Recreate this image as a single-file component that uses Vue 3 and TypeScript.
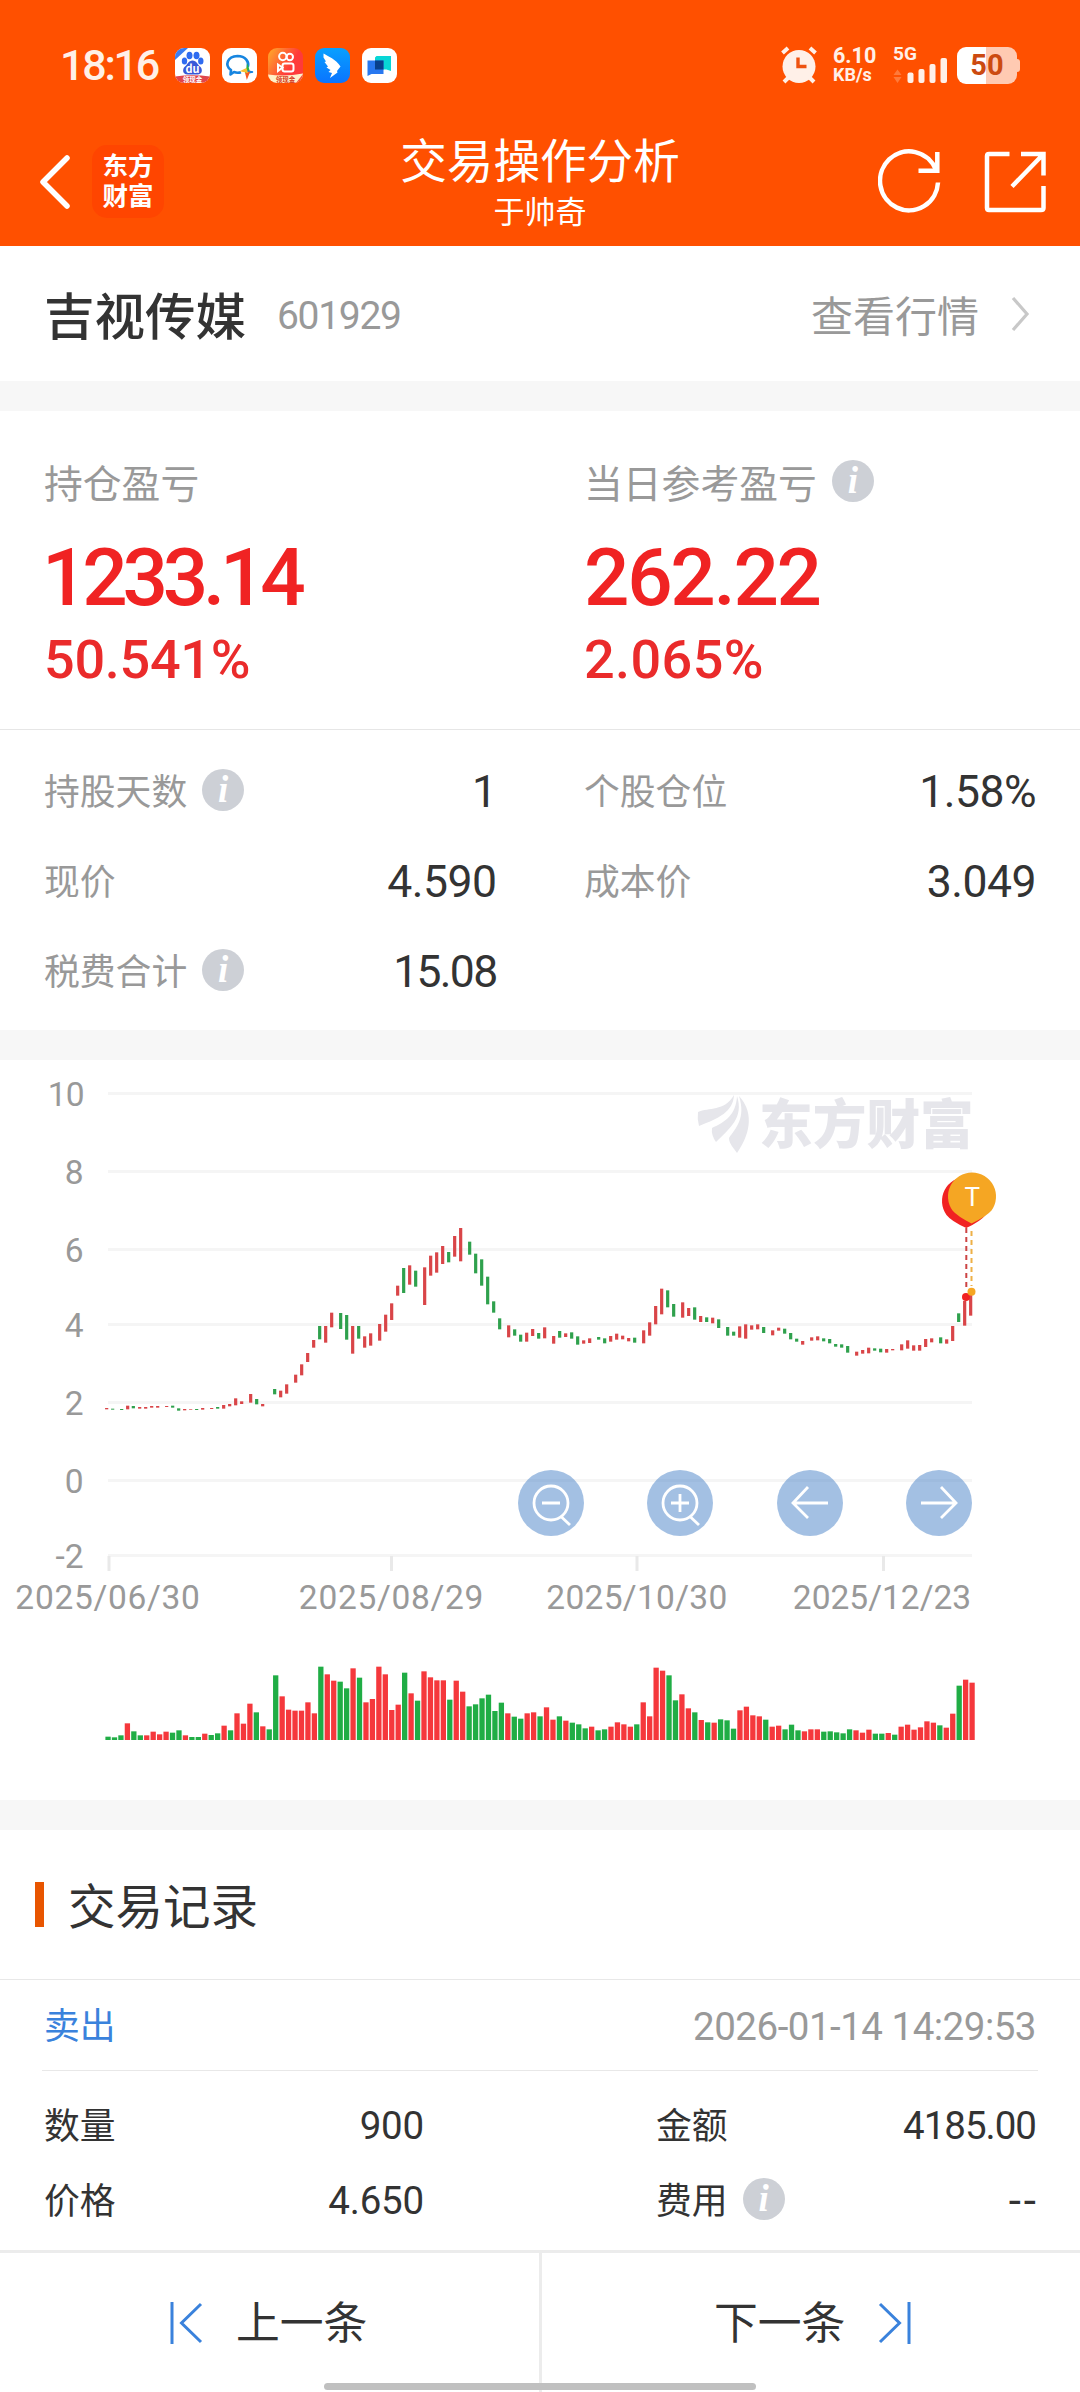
<script setup lang="ts">
type Tone = 'up' | 'down'
interface Bar { x: number; y: number; h: number; tone: Tone }

const toneOf = (token: string): Tone => (token.endsWith('r') ? 'up' : 'down')

// Each candle is "centre,top,bottom,tone" in thirds of a pixel from the group's origin.
const candleGroups: { x: number; y: number; data: string }[] = [
  { x: 80, y: 1200, data: '80,624,628r 98,626,629g 125,627,630g 143,617,628r 160,618,625g 179,621,626r 197,621,626r 215,618,623r 233,618,623r 260,618,621r 278,617,623g 296,625,632g 314,627,631r 332,627,629r 350,627,630g 368,624,629r 395,624,627r 413,621,626g 431,615,626r 449,612,619r 467,595,616r 485,604,612r 512,582,608r 530,597,613g 548,612,619r 584,567,583g 602,572,592r 620,553,581r 647,524,548r 665,493,526r 683,459,486r 701,420,443r 719,378,418g 737,378,428r 755,338,382r 782,339,387g 800,345,419g 818,378,461r 836,378,416g 854,409,443r 872,400,437r 899,372,422r 917,344,395r 935,310,360r 953,257,287r 971,204,279g' },
  { x: 400, y: 1200, data: '29,196,254r 47,212,260g 74,202,315r 92,167,227r 110,157,218r 128,138,192r 146,156,187g 164,108,170r 182,84,184r 209,125,164g 227,161,220g 245,178,257g 263,230,313g 281,304,338g 299,355,388g 326,376,412r 344,388,407g 362,404,425g 380,398,425r 398,387,408r 416,399,416g 434,382,415r 461,408,431r 479,393,413g 497,400,411r 515,397,416g 533,409,434g 551,421,431r 569,415,429r 596,411,419g 614,415,430g 632,408,425r 650,401,419r 668,407,418r 686,414,424r 704,413,428g 731,391,430r 749,367,407r 767,318,373r 785,266,343r 803,271,322g 821,312,350g 848,307,353r 866,324,348r 884,322,359g 902,348,366r 920,352,366g 938,353,370r 956,358,384g' },
  { x: 680, y: 1260, data: '143,201,227g 161,215,227g 179,199,233r 197,193,236r 215,196,209r 233,193,208r 251,201,219g 278,211,226r 296,203,212r 314,206,221g 332,219,238g 350,236,245g 368,243,254r 395,232,242r 413,229,241r 431,235,244g 449,237,250g 467,252,260g 485,253,263g 503,258,278g 530,275,287r 548,270,281r 566,263,280r 584,265,272g 602,266,277g 620,267,278r 638,267,271r 665,253,271r 683,241,266r 701,256,272r 719,255,272r 737,237,261r 755,235,247r 782,232,250g 800,238,251r 818,198,243r 836,160,186g 854,123,197r 872,105,167r' },
]

const candles: Bar[] = candleGroups.flatMap((g) =>
  g.data.split(' ').map((token) => {
    const [cx, top, bottom] = token.slice(0, -1).split(',').map(Number)
    return { x: g.x + cx / 3 - 1.6, y: g.y + top / 3, h: (bottom - top) / 3, tone: toneOf(token) }
  }),
)

const volumeData =
  '260g 262g 256g 220r 244g 256g 256r 245r 253r 245r 248g 241g 256r 261g 261g 251r 255g 250g 227r 241g 190r 221r 161r 187g 229r 238g 76g 139r 179r 182r 182r 157r 190r 50g 73r 92r 95g 115g 55r 83g 157r 147r 50r 73r 180r 164r 68g 130r 152g 64r 82r 91r 91r 149g 92r 125r 169g 163g 145g 134g 183g 158g 190r 200g 206g 190r 187r 199g 172r 209r 199g 212r 218g 223g 235g 230r 241g 238g 230r 217r 223r 230r 223g 157r 199r 53r 62r 76g 151g 133r 175r 187g 210r 217g 218r 208g 211g 236g 181r 170r 196r 199r 209g 230r 227r 238g 224g 241g 244r 238r 238r 245g 244g 247g 250g 238g 241r 248r 239r 251g 251g 249r 254g 230r 224r 239r 232r 214r 218r 226g 233r 191r 107g 89r 98r'

const volumes: Bar[] = volumeData.split(' ').map((token, i) => {
  const h = (270 - parseInt(token, 10)) / 3
  return { x: 108 + i * 6.448 - 2.6, y: 1740 - h, h, tone: toneOf(token) }
})

const yAxis = [
  { label: '10', y: 1093.5 },
  { label: '8', y: 1171.5 },
  { label: '6', y: 1249.5 },
  { label: '4', y: 1324.5 },
  { label: '2', y: 1402.5 },
  { label: '0', y: 1480.5 },
  { label: '-2', y: 1555.5 },
]

const xAxis = [
  { label: '2025/06/30', x: 109, text: 108, gap: 0.7 },
  { label: '2025/08/29', x: 391.5, text: 391.5, gap: 0.7 },
  { label: '2025/10/30', x: 637, text: 637, gap: 0.3 },
  { label: '2025/12/23', x: 883.5, text: 882, gap: 0 },
]

const details = [
  { label: '持股天数', value: '1', info: true },
  { label: '个股仓位', value: '1.58%', info: false },
  { label: '现价', value: '4.590', info: false },
  { label: '成本价', value: '3.049', info: false },
  { label: '税费合计', value: '15.08', info: true },
]
</script>

<template>
  <div class="page">
    <header class="top">
      <div class="status">
        <span class="clock">18:16</span>
        <div class="apps">
          <svg viewBox="0 0 35 35">
            <defs><clipPath id="round"><rect width="35" height="35" rx="9" /></clipPath></defs>
            <g clip-path="url(#round)">
              <rect width="35" height="35" fill="#fff" />
              <path d="M0 0H13L0 12Z" fill="#3a7cf0" />
              <g fill="#2f6bf0">
                <ellipse cx="14.500" cy="7.500" rx="3" ry="3.800" />
                <ellipse cx="21.500" cy="7.500" rx="3" ry="3.800" />
                <ellipse cx="9.500" cy="13" rx="2.700" ry="3.500" />
                <ellipse cx="25.800" cy="13" rx="2.700" ry="3.500" />
                <path d="M17.500 12.500c4 0 5 4 7.500 6 3 2.500 2.500 8-2.500 8h-10c-5 0-5.500-5.500-2.500-8 2.500-2 3.500-6 7.500-6z" fill="#3858d8" />
              </g>
              <text x="17.500" y="25" font-size="11" font-weight="700" fill="#fff" text-anchor="middle">du</text>
              <path d="M0 28.500Q17.500 26 35 28.500V35H0Z" fill="#e0464c" />
              <text x="17.500" y="34" font-size="6.500" font-weight="700" fill="#fff" text-anchor="middle">领现金</text>
            </g>
          </svg>
          <svg viewBox="0 0 35 35">
            <rect width="35" height="35" rx="9" fill="#fff" />
            <path d="M19 24.200C16.500 25 14 24.800 12 24L8.500 26.500 9 22C2.500 17.500 5 8.500 15.500 8c8 0 12 6 10.300 11" fill="none" stroke="#1685e0" stroke-width="2.600" stroke-linejoin="round" />
            <path d="M25.500 18l1.500 5-3 1z" fill="#2fb344" stroke="#2fb344" stroke-width="1.500" />
            <path d="M31 24l-5 1-1-2z" fill="#1685e0" stroke="#1685e0" stroke-width="1.500" />
            <path d="M25 29.500l-1-4 3-1z" fill="#fa5a1e" stroke="#fa5a1e" stroke-width="1.500" />
            <path d="M20 23l4-2 1 3z" fill="#fbc02d" stroke="#fbc02d" stroke-width="1.500" />
          </svg>
          <svg viewBox="0 0 35 35">
            <defs>
              <linearGradient id="warm" x1="0" y1="0" x2="1" y2="0.600">
                <stop offset="0" stop-color="#ffae2a" /><stop offset="0.700" stop-color="#ff3a3a" />
              </linearGradient>
            </defs>
            <g clip-path="url(#round)">
              <rect width="35" height="35" fill="url(#warm)" />
              <g fill="none" stroke="#fff" stroke-width="2">
                <circle cx="14.800" cy="8.500" r="3.700" /><circle cx="21.800" cy="9" r="3.200" />
                <rect x="14.500" y="15.500" width="11" height="8" rx="2.200" /><path d="M14.500 19.500L10 16.500v6.500z" />
              </g>
              <path d="M0 26.500Q17.500 29 35 25.500V35H0Z" fill="#fff0c8" />
              <path d="M28 35L35 26v9z" fill="#f4523b" />
              <text x="17.500" y="34" font-size="6.500" font-weight="700" fill="#d63a20" text-anchor="middle">领现金</text>
            </g>
          </svg>
          <svg viewBox="0 0 35 35">
            <defs>
              <linearGradient id="sky" x1="0" y1="0" x2="0" y2="1">
                <stop offset="0" stop-color="#08a0ff" /><stop offset="1" stop-color="#0a74ff" />
              </linearGradient>
            </defs>
            <rect width="35" height="35" rx="9" fill="url(#sky)" />
            <path d="M8.500 5.500C13 8.500 21 11 25.500 18.500L22 23 22.500 24.500 15 30 17 25 13.500 24 15.500 22 11.500 19.500 13 18.500 9.500 14 11 13.500 8.500 9.500Z" fill="#fff" />
          </svg>
          <svg viewBox="0 0 35 35">
            <rect width="35" height="35" rx="9" fill="#fff" />
            <path d="M14.500 8H29v15l-4.500-1.500H13V9.500Z" fill="#08d6d6" />
            <path d="M5.500 12.500H21.500V26H9.500L5.500 28Z" fill="#2878f0" />
            <rect x="13" y="12.500" width="8.500" height="9" fill="#08408c" />
          </svg>
        </div>
        <svg class="alarm" viewBox="0 0 38 38">
          <circle cx="19" cy="20.500" r="16.500" fill="#fff0e8" />
          <path d="M2.500 7L8 2M35.500 7L30 2" stroke="#fff0e8" stroke-width="4" />
          <path d="M4 36l5-5M34 36l-5-5" stroke="#fff0e8" stroke-width="4" />
          <path d="M18 11.500V20.500H26.500" fill="none" stroke="#ee5210" stroke-width="3.400" />
        </svg>
        <div class="net"><span>6.10</span><span class="unit">KB/s</span></div>
        <div class="signal">
          <span>5G</span>
          <svg viewBox="0 0 54 26">
            <path d="M0.500 18L4.500 12.500 8.500 18ZM0.500 20L4.500 26 8.500 20Z" fill="#ff7a3a" />
            <g fill="#fff0e8">
              <rect x="14.500" y="15.500" width="6" height="10.500" rx="2" /><rect x="25.500" y="12" width="6" height="14" rx="2" />
              <rect x="36.500" y="7" width="6" height="19" rx="2" /><rect x="47.500" y="1" width="6.500" height="25" rx="2" />
            </g>
          </svg>
        </div>
        <div class="battery"><span>50</span></div>
      </div>
      <div class="nav">
        <div class="nav-side">
          <svg class="back" viewBox="0 0 34 58"><path d="M29 5L5 29 29 53" fill="none" stroke="#fff" stroke-width="5.500" stroke-linecap="round" stroke-linejoin="round" /></svg>
          <div class="brand"><span>东方</span><span>财富</span></div>
        </div>
        <div class="titles"><h1>交易操作分析</h1><p>于帅奇</p></div>
        <div class="nav-side actions">
          <svg width="64" height="66" viewBox="0 0 64 66">
            <path d="M60 33.500A29 29.500 0 1 1 58 21" fill="none" stroke="#fff" stroke-width="4.500" />
            <path d="M59.300 3V21.800H40.500" fill="none" stroke="#fff" stroke-width="4.500" />
          </svg>
          <svg width="62" height="64" viewBox="0 0 62 64">
            <path d="M25.500 4H5Q3 4 3 6V58Q3 60 5 60H57Q59.500 60 59.500 58V36" fill="none" stroke="#fff" stroke-width="4.500" />
            <path d="M37 4H59.500V25.500M59 4.500L28 36.500" fill="none" stroke="#fff" stroke-width="4.500" />
          </svg>
        </div>
      </div>
    </header>

    <section class="stock">
      <span class="name cjk">吉视传媒</span>
      <span class="code">601929</span>
      <span class="quote cjk">查看行情</span>
      <svg class="more" viewBox="0 0 20 40"><path d="M3 4L17 20 3 36" fill="none" stroke="#c8c8c8" stroke-width="3.200" /></svg>
    </section>

    <section class="summary">
      <div class="cell held">
        <div class="caption"><span class="cjk">持仓盈亏</span></div>
        <div class="big">1233.14</div>
        <div class="pct">50.541%</div>
      </div>
      <div class="cell">
        <div class="caption"><span class="cjk">当日参考盈亏</span><i class="info">i</i></div>
        <div class="big">262.22</div>
        <div class="pct">2.065%</div>
      </div>
    </section>

    <section class="details">
      <div v-for="d in details" :key="d.label" class="detail">
        <span class="cjk">{{ d.label }}</span><i v-if="d.info" class="info">i</i>
        <b>{{ d.value }}</b>
      </div>
    </section>

    <section class="chart">
      <svg viewBox="0 1060 1080 740" width="1080" height="740">
        <g fill="#f5f5f5">
          <rect v-for="t in yAxis" :key="t.label" x="108" :y="t.y - 1.5" width="864" height="3" />
        </g>
        <g fill="#e9e9e9">
          <rect v-for="t in xAxis" :key="t.label" :x="t.x - 1.5" y="1556" width="3" height="15" />
        </g>
        <g class="axis">
          <text v-for="t in yAxis" :key="t.label" x="83.500" :y="t.y + 12" text-anchor="end" :letter-spacing="t.label === '10' ? -1 : 0">{{ t.label }}</text>
          <text v-for="t in xAxis" :key="t.label" :x="t.text" y="1609" text-anchor="middle" :letter-spacing="t.gap">{{ t.label }}</text>
        </g>
        <g fill="#e6e6eb">
          <path d="M698 1112C709 1107 724 1112 734 1095C733 1112 719 1118 699 1126Q697 1119 698 1112Z" />
          <path d="M712 1128C725 1122 736 1115 737 1096C744 1118 730 1128 716 1142Q711 1135 712 1128Z" />
          <path d="M739 1096C752 1110 753 1130 737 1153C734 1148 729 1144 729 1138C736 1128 746 1118 739 1096Z" />
          <text class="mark" x="759" y="1144">东方财富</text>
        </g>
        <rect v-for="(c, i) in candles" :key="i" :class="c.tone" :x="c.x" :y="c.y" width="3.2" :height="c.h" />
        <g class="volume">
          <rect v-for="(v, i) in volumes" :key="i" :class="v.tone" :x="v.x" :y="v.y" width="5.3" :height="v.h" />
        </g>

        <path d="M966.300 1228V1290" stroke="#cc4444" stroke-width="2" stroke-dasharray="5 4" />
        <path d="M971.500 1231V1286" stroke="#eeb047" stroke-width="2" stroke-dasharray="5 4" />
        <circle cx="966" cy="1297" r="4" fill="#f12222" />
        <circle cx="971.500" cy="1291.700" r="4" fill="#f5a623" />
        <path d="M966 1177A24 24 0 0 0 946.500 1215Q951 1221 966.300 1228Q981 1221 985.500 1215A24 24 0 0 0 966 1177Z" fill="#f12222" />
        <path d="M972 1172.500A24 24 0 0 0 952.500 1210.500Q957 1216 971.500 1223.500Q987 1216 991.500 1210.500A24 24 0 0 0 972 1172.500Z" fill="#f5a623" />
        <text class="pin" x="972.200" y="1206" text-anchor="middle">T</text>

        <g fill="rgba(72,130,200,0.5)">
          <circle cx="551" cy="1503" r="33" /><circle cx="680" cy="1503" r="33" />
          <circle cx="810" cy="1503" r="33" /><circle cx="939" cy="1503" r="33" />
        </g>
        <g fill="none" stroke="#fff" stroke-width="2.800">
          <circle cx="551" cy="1503" r="17" /><path d="M542 1503H560M561.500 1517L570 1525" />
          <circle cx="680" cy="1503" r="17" /><path d="M671 1503H689M680 1494V1512M690.500 1517L699 1525" />
          <path d="M828 1503H793M808 1487L793 1503 808 1518" />
          <path d="M921 1503H956M941 1487L956 1503 941 1518" />
        </g>
      </svg>
    </section>

    <section class="records">
      <div class="heading"><span class="accent"></span><h2 class="cjk">交易记录</h2></div>
      <div class="record-head"><span class="cjk">卖出</span><time>2026-01-14 14:29:53</time></div>
      <div class="record-row first">
        <div class="item"><span class="cjk">数量</span><b>900</b></div>
        <div class="item"><span class="cjk">金额</span><b class="amount">4185.00</b></div>
      </div>
      <div class="record-row">
        <div class="item"><span class="cjk">价格</span><b>4.650</b></div>
        <div class="item"><span class="cjk">费用</span><i class="info">i</i><b class="dash">--</b></div>
      </div>
    </section>

    <footer class="pager">
      <div class="page-btn prev">
        <svg viewBox="0 0 34 44"><path d="M3 1V43M32 3L12.500 22 32 41" fill="none" stroke="#3a82dc" stroke-width="3" /></svg>
        <span class="cjk">上一条</span>
      </div>
      <div class="page-btn next">
        <span class="cjk">下一条</span>
        <svg viewBox="0 0 34 44"><path d="M31 1V43M2 3L21.500 22 2 41" fill="none" stroke="#3a82dc" stroke-width="3" /></svg>
      </div>
      <div class="home"></div>
    </footer>
  </div>
</template>

<style>
body { background: #fff; }
</style>

<style scoped>
.page {
  width: 1080px;
  height: 2392px;
  display: flex;
  flex-direction: column;
  background: #fff;
  color: #333;
  font-family: Roboto, "Noto Sans CJK SC", sans-serif;
  overflow: hidden;
}
.page * { box-sizing: border-box; }
.page > * { flex-shrink: 0; }
.cjk {
  font-family: "Noto Sans CJK SC", sans-serif;
  line-height: 1;
  padding-bottom: 0.09em;
  white-space: nowrap;
}
b { font-weight: 400; }

.top { height: 246px; background: #ff5000; color: #fff; }
.status { height: 132px; padding: 0 60px 2px 60px; display: flex; align-items: center; }
.clock { width: 115px; font-size: 43px; font-weight: 500; letter-spacing: -2.200px; color: #fff0e8; }
.apps { display: flex; gap: 11.700px; }
.apps svg { width: 35px; height: 35px; font-family: "Noto Sans CJK SC", sans-serif; }
.alarm { width: 38px; height: 38px; margin-left: auto; }
.net { width: 44px; margin-left: 15px; display: flex; flex-direction: column; font-weight: 700; font-size: 21.500px; line-height: 19px; color: #fff0e8; }
.net .unit { font-size: 18px; line-height: 20px; }
.signal { margin-left: 16px; width: 54px; height: 38px; display: flex; flex-direction: column; font-size: 19px; font-weight: 700; line-height: 16px; color: #fff0e8; }
.signal svg { width: 54px; height: 26px; margin-top: -5px; }
.battery {
  position: relative;
  width: 60px;
  height: 37px;
  margin: 0 3px 0 10px;
  border-radius: 9px;
  background: linear-gradient(90deg, #fff 48%, #ffcab2 48%);
  color: #cc4a10;
  font: 700 29px/36px Roboto, sans-serif;
  text-align: center;
}
.battery::after { content: ""; position: absolute; left: 60px; top: 12px; width: 3px; height: 13px; border-radius: 0 3px 3px 0; background: #ffcab2; }

.nav { height: 102px; padding: 0 34px 3px 38px; display: flex; align-items: center; justify-content: space-between; }
.nav-side { width: 240px; display: flex; align-items: center; }
.back { width: 34px; height: 58px; }
.brand {
  width: 72px;
  height: 73px;
  margin-left: 20px;
  border-radius: 15px;
  background: #ff4500;
  display: flex;
  flex-direction: column;
  align-items: center;
  justify-content: center;
  font: 700 25.500px/30px "Liberation Sans", "Noto Sans CJK SC", sans-serif;
  padding-bottom: 2px;
}
.titles { text-align: center; font-family: "Noto Sans CJK SC", sans-serif; margin-left: -4px; }
.titles h1 { margin: 0; font-size: 46.600px; font-weight: 400; line-height: 57px; }
.titles p { margin: 0; font-size: 31px; line-height: 48px; }
.actions { justify-content: flex-end; gap: 42px; }

.stock { height: 165px; padding: 4px 50px 0 44px; display: flex; align-items: center; border-bottom: 30px solid #f7f7f7; }
.name { font-size: 50.500px; font-weight: 500; }
.code { margin-left: 31px; font-size: 39px; letter-spacing: -1.300px; color: #999; }
.quote { margin-left: auto; font-size: 42px; color: #999; }
.more { width: 20px; height: 40px; margin: -4px 0 0 31px; }

.summary { height: 319px; padding: 0 44px; display: grid; grid-template-columns: 540px 1fr; border-bottom: 1px solid #e6e6e6; }
.cell { padding-top: 46px; }
.caption { height: 52px; display: flex; align-items: center; font-size: 38.800px; color: #999; }
.info {
  width: 42px;
  height: 42px;
  border-radius: 50%;
  background: #cdd0d6;
  color: #fff;
  font: italic 700 37px/42px "Liberation Serif", serif;
  text-align: center;
  margin: -4px 0 0 15px;
}
.big { height: 136px; font-size: 80px; line-height: 138px; font-weight: 500; color: #f02323; letter-spacing: -2.300px; }
.pct { height: 60px; margin-top: -15px; font-size: 54px; line-height: 60px; font-weight: 500; color: #ea2b2b; letter-spacing: 0.400px; }
.held .big { letter-spacing: -5.200px; margin-left: -2px; }
.held .pct { letter-spacing: -0.300px; }

.details { height: 330px; padding: 17px 44px 0; display: grid; grid-template-columns: 452.500px 452px; grid-auto-rows: 90px; column-gap: 87.500px; border-bottom: 30px solid #f7f7f7; }
.detail { display: flex; align-items: center; font-size: 35.800px; color: #999; }
.detail b { margin-left: auto; font-size: 44.500px; letter-spacing: -0.500px; color: #333; }
.detail:last-child b { letter-spacing: -1.700px; }

.chart { height: 770px; border-bottom: 30px solid #f7f7f7; }
.chart svg { display: block; }
.axis { font-size: 33.500px; fill: #999; }
.mark { font: 900 53.700px "Noto Sans CJK SC", sans-serif; }
.pin { font-size: 26px; fill: #fff; }
.up { fill: #d94548; }
.down { fill: #2fa14d; }
.volume .up { fill: #f5383c; }
.volume .down { fill: #20ad45; }

.records { height: 420px; }
.heading { height: 150px; padding-left: 35px; display: flex; align-items: center; border-bottom: 1px solid #e8e8e8; }
.accent { width: 9px; height: 45px; background: #e85500; }
.heading h2 { margin: 3px 0 0 24px; font-size: 47.500px; font-weight: 400; }
.record-head { height: 91px; margin: 0 42px; padding: 2px 2px 0; display: flex; align-items: center; justify-content: space-between; border-bottom: 1px solid #e8e8e8; font-size: 35.800px; color: #3a82dc; }
.record-head time { font-size: 38.500px; letter-spacing: -0.500px; color: #999; }
.record-row { height: 75px; padding: 0 44px; display: flex; justify-content: space-between; }
.record-row.first { margin-top: 17px; }
.item { width: 380px; display: flex; align-items: center; font-size: 35.800px; }
.item b { margin-left: auto; font-size: 38.500px; letter-spacing: -0.200px; }
.item .amount { letter-spacing: -1px; }
.item .dash { font-size: 44px; letter-spacing: 3px; margin-right: -3px; }

.pager { position: relative; height: 142px; display: flex; border-top: 3px solid #ececec; }
.page-btn { height: 139px; display: flex; align-items: center; font-size: 43.800px; }
.prev { width: 542px; padding-left: 169px; gap: 33px; border-right: 3px solid #ececec; }
.next { flex: 1; padding-left: 172px; gap: 33px; }
.page-btn svg { width: 34px; height: 44px; }
.home { position: absolute; left: 324px; bottom: 2px; width: 432px; height: 7px; border-radius: 4px; background: #c0c0c0; }
</style>
